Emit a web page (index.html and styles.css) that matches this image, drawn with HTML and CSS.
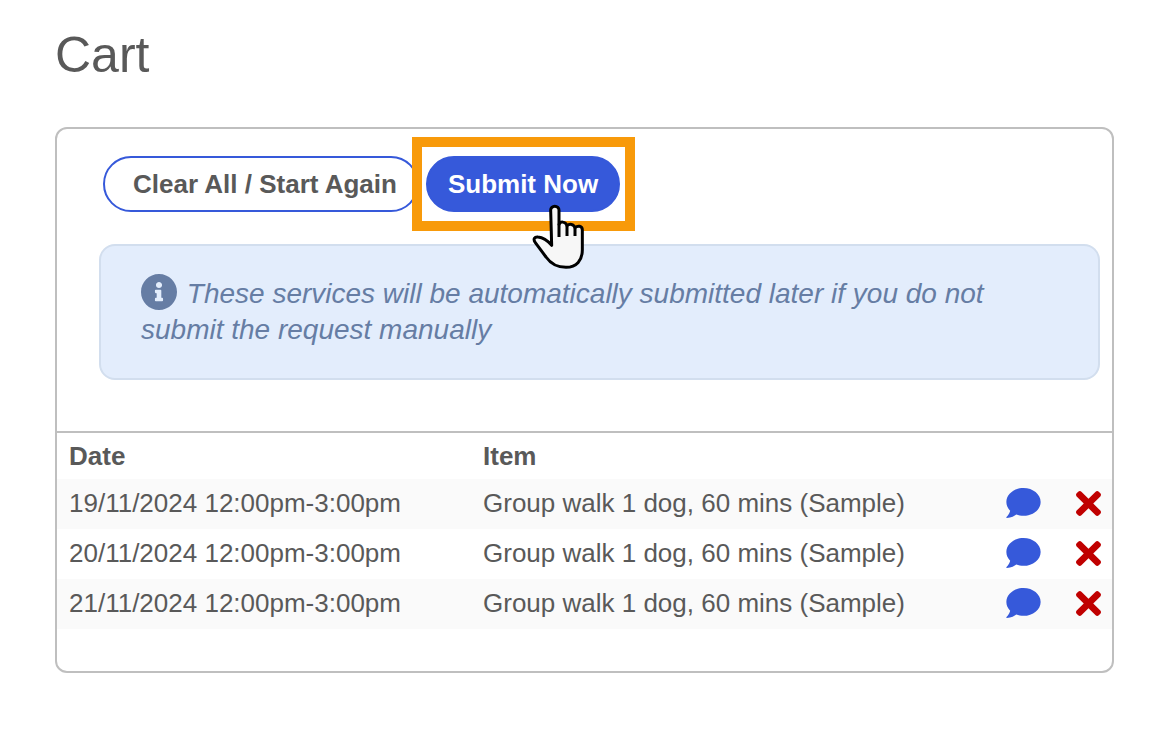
FILE: index.html
```html
<!DOCTYPE html>
<html lang="en">
<head>
    <meta charset="UTF-8">
    <meta name="viewport" content="width=device-width, initial-scale=1.0">
    <title>Cart</title>
    <link rel="stylesheet" href="styles.css">
</head>
<body>
    <!-- Shared icons -->
    <svg class="sprite" aria-hidden="true">
        <symbol id="icon-comment" viewBox="0 32 512 448">
            <path d="M256 32C114.6 32 0 125.1 0 240c0 49.6 21.4 95 57 130.7C44.5 421.1 2.7 466 2.2 466.5c-2.2 2.3-2.8 5.7-1.5 8.7S4.8 480 8 480c66.3 0 116-31.8 140.6-51.4 32.7 12.3 69 19.4 107.4 19.4 141.4 0 256-93.1 256-208S397.4 32 256 32z"/>
        </symbol>
        <symbol id="icon-times" viewBox="0 80 352 352">
            <path d="M242.72 256l100.07-100.07c12.28-12.28 12.28-32.19 0-44.48l-22.24-22.24c-12.28-12.28-32.19-12.28-44.48 0L176 189.28 75.93 89.21c-12.28-12.28-32.19-12.28-44.48 0L9.21 111.45c-12.28 12.28-12.28 32.19 0 44.48L109.28 256 9.21 356.07c-12.28 12.28-12.28 32.19 0 44.48l22.24 22.24c12.28 12.28 32.2 12.28 44.48 0L176 322.72l100.07 100.07c12.28 12.28 32.2 12.28 44.48 0l22.24-22.24c12.28-12.28 12.28-32.19 0-44.48L242.72 256z"/>
        </symbol>
    </svg>

    <h1>Cart</h1>

    <main class="cart">
        <div class="cart-top">
            <div class="actions">
                <button type="button" class="btn btn-outline">Clear All / Start Again</button>
                <div class="highlight">
                    <button type="submit" class="btn btn-primary">Submit Now</button>
                    <svg class="pointer" viewBox="36 27 156 198" aria-hidden="true">
                        <path d="M95 151L92 46A12.500 12.500 0 0 1 117 46V88C121 79 136 78 141 92C149 85 161 87 165 98C173 91 187 92 187 105V165C187 195 170 217 138 217C108 217 90 203 78 186L46 143C38 131 44 125 54 126C70 127 84 138 95 151z"/>
                        <path d="M117 86V126M141 92V123M165 98V123"/>
                    </svg>
                </div>
            </div>
            <p class="notice">
                <svg class="info" viewBox="8 8 496 496" aria-hidden="true">
                    <path d="M256 8C119.043 8 8 119.083 8 256c0 136.997 111.043 248 248 248s248-111.003 248-248C504 119.083 392.957 8 256 8zm0 110c23.196 0 42 18.804 42 42s-18.804 42-42 42-42-18.804-42-42 18.804-42 42-42zm56 254c0 6.627-5.373 12-12 12h-88c-6.627 0-12-5.373-12-12v-24c0-6.627 5.373-12 12-12h12v-64h-12c-6.627 0-12-5.373-12-12v-24c0-6.627 5.373-12 12-12h64c6.627 0 12 5.373 12 12v100h12c6.627 0 12 5.373 12 12v24z"/>
                </svg>
                These services will be automatically submitted later if you do not submit the request manually
            </p>
        </div>

        <table class="cart-items">
            <thead>
                <tr>
                    <th class="col-date">Date</th>
                    <th>Item</th>
                    <td class="col-comment"></td>
                    <td class="col-remove"></td>
                </tr>
            </thead>
            <tbody>
                <tr>
                    <td>19/11/2024 12:00pm-3:00pm</td>
                    <td>Group walk 1 dog, 60 mins (Sample)</td>
                    <td><button type="button" class="icon-btn comment" aria-label="Add comment"><svg><use href="#icon-comment"/></svg></button></td>
                    <td><button type="button" class="icon-btn remove" aria-label="Remove"><svg><use href="#icon-times"/></svg></button></td>
                </tr>
                <tr>
                    <td>20/11/2024 12:00pm-3:00pm</td>
                    <td>Group walk 1 dog, 60 mins (Sample)</td>
                    <td><button type="button" class="icon-btn comment" aria-label="Add comment"><svg><use href="#icon-comment"/></svg></button></td>
                    <td><button type="button" class="icon-btn remove" aria-label="Remove"><svg><use href="#icon-times"/></svg></button></td>
                </tr>
                <tr>
                    <td>21/11/2024 12:00pm-3:00pm</td>
                    <td>Group walk 1 dog, 60 mins (Sample)</td>
                    <td><button type="button" class="icon-btn comment" aria-label="Add comment"><svg><use href="#icon-comment"/></svg></button></td>
                    <td><button type="button" class="icon-btn remove" aria-label="Remove"><svg><use href="#icon-times"/></svg></button></td>
                </tr>
            </tbody>
        </table>
    </main>
</body>
</html>
```
FILE: styles.css
```css
* {
    box-sizing: border-box;
}
body {
    font-family: 'Liberation Sans', Arial, sans-serif;
    font-size: 26px;
    line-height: 30px;
    margin: 0;
    padding: 25px 48px 24px 55px;
    background: #fff;
    color: #595959;
}
.sprite {
    display: none;
}
h1 {
    margin: 0 0 42px;
    font-size: 50px;
    font-weight: 400;
    line-height: 60px;
}
.cart {
    border: 2px solid #bfbfbf;
    border-radius: 12px;
    padding-bottom: 42px;
}
.cart-top {
    padding: 27px 12px 51px 42px;
    border-bottom: 2px solid #bfbfbf;
}
.actions {
    display: flex;
    gap: 7px;
    padding-left: 4px;
    margin-bottom: 32px;
}
.btn {
    height: 56px;
    padding: 0 20px;
    border: 2px solid #3659da;
    border-radius: 28px;
    font-family: inherit;
    font-size: 26px;
    font-weight: 700;
    cursor: pointer;
}
.btn-outline {
    padding-left: 28px;
    background: #fff;
    color: #595959;
}
.btn-primary {
    background: #3659da;
    color: #fff;
}
.highlight {
    position: relative;
}
.highlight::before {
    content: "";
    position: absolute;
    inset: -19px -15px -19px -14px;
    border: 10px solid #f89a0a;
    pointer-events: none;
}
.pointer {
    position: absolute;
    top: 48px;
    left: 106px;
    width: 52px;
    height: 66px;
    fill: #f7f7f7;
    stroke: #000;
    stroke-width: 9;
    stroke-linecap: butt;
    stroke-linejoin: round;
    pointer-events: none;
}
.notice {
    margin: 0;
    padding: 30px 40px;
    border: 2px solid #d2deee;
    border-radius: 16px;
    background: #e3edfc;
    color: #667da4;
    font-size: 28px;
    font-style: italic;
    line-height: 36px;
}
.info {
    width: 36px;
    height: 36px;
    margin: -2px 2px 0 0;
    vertical-align: top;
    fill: #667da4;
}
.cart-items {
    width: 100%;
    table-layout: fixed;
    border-collapse: collapse;
}
.cart-items th,
.cart-items td {
    height: 50px;
    padding: 0 12px 2px;
    text-align: left;
}
.cart-items thead th,
.cart-items thead td {
    height: 46px;
    padding-bottom: 0;
}
.cart-items tbody tr:nth-child(odd) {
    background: #fafafa;
}
.col-date {
    width: 414px;
}
.col-comment {
    width: 70px;
}
.col-remove {
    width: 48px;
}
.icon-btn {
    display: block;
    padding: 0;
    border: none;
    background: none;
    cursor: pointer;
}
.icon-btn svg {
    display: block;
}
.comment svg {
    width: 35px;
    height: 30px;
    fill: #3659da;
}
.remove svg {
    width: 25px;
    height: 25px;
    fill: #c00000;
}
```
